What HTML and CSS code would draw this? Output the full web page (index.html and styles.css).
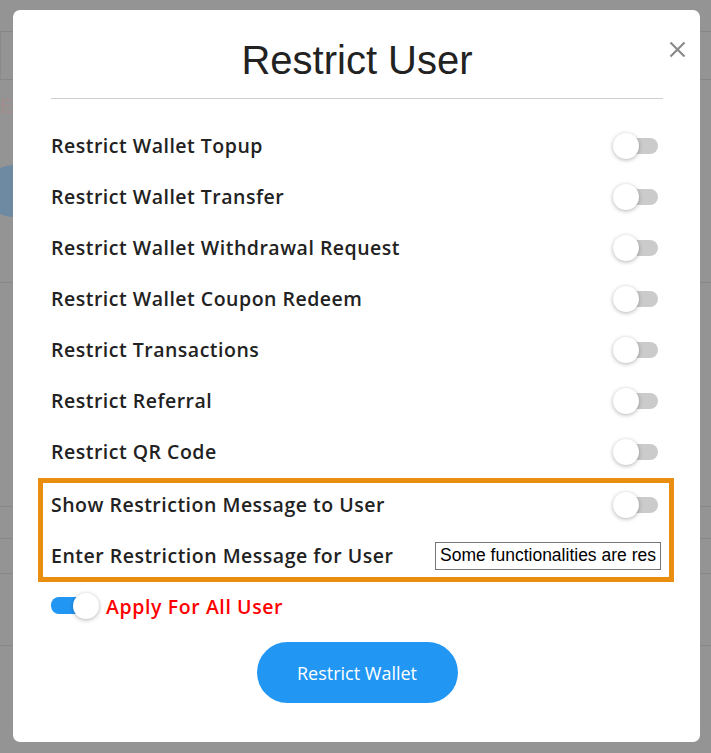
FILE: index.html
```html
<!DOCTYPE html>
<html lang="en">
<head>
    <meta charset="UTF-8">
    <meta name="viewport" content="width=device-width, initial-scale=1.0">
    <title>Restrict User</title>

    <!-- CSS -->
    <link rel="stylesheet" href="styles.css">
</head>
<body>

    <!-- Página por trás do modal -->
    <div class="page">
        <div class="search-box"></div>
        <div class="page-letter">E</div>
        <div class="avatar"></div>
        <div class="page-row row-tall"></div>
        <div class="page-row row-a"></div>
        <div class="page-row row-b"></div>
        <div class="page-row row-c"></div>
        <div class="page-row row-d"></div>
    </div>

    <!-- Modal -->
    <div class="modal">
        <a href="#" class="close-btn" aria-label="Close">
            <svg width="17" height="17" viewBox="0 0 17 17">
                <path d="M1.5 1.5 L15.5 15.5 M15.5 1.5 L1.5 15.5" stroke="#8a8a8a" stroke-width="2.2" fill="none"/>
            </svg>
        </a>

        <h2 class="modal-title">Restrict User</h2>

        <div class="options">
            <div class="option"><span>Restrict Wallet Topup</span><span class="switch"></span></div>
            <div class="option"><span>Restrict Wallet Transfer</span><span class="switch"></span></div>
            <div class="option"><span>Restrict Wallet Withdrawal Request</span><span class="switch"></span></div>
            <div class="option"><span>Restrict Wallet Coupon Redeem</span><span class="switch"></span></div>
            <div class="option"><span>Restrict Transactions</span><span class="switch"></span></div>
            <div class="option"><span>Restrict Referral</span><span class="switch"></span></div>
            <div class="option"><span>Restrict QR Code</span><span class="switch"></span></div>

            <!-- Mensagem de restrição -->
            <div class="message-box">
                <div class="option"><span>Show Restriction Message to User</span><span class="switch"></span></div>
                <div class="option">
                    <span>Enter Restriction Message for User</span>
                    <input type="text" class="message-input" value="Some functionalities are restricted for your account">
                </div>
            </div>

            <div class="apply-all">
                <span class="switch on"></span>
                <span>Apply For All User</span>
            </div>
        </div>

        <div class="actions">
            <button class="restrict-btn">Restrict Wallet</button>
        </div>
    </div>

</body>
</html>
```

FILE: styles.css
```css
body {
    margin: 0;
    padding: 0;
    background-color: #949494;
    font-family: 'Open Sans', 'Liberation Sans', sans-serif;
    color: #222;
}

/* Página de fundo (já escurecida pelo overlay) */
.page {
    height: 753px;
    overflow: hidden;
}

.search-box {
    margin-top: 31px;
    height: 47px;
    border-top: 1px solid #878787;
    border-bottom: 1px solid #878787;
    border-left: 1px solid #8a8a8a;
}

.page-letter {
    margin-top: 14px;
    font-family: 'Liberation Sans', Arial, sans-serif;
    font-size: 20px;
    line-height: 24px;
    color: #a28c8c;
}

.avatar {
    margin-top: 47px;
    margin-left: -14px;
    width: 54px;
    height: 52px;
    border-radius: 50%;
    background-color: #6e8aa2;
}

.page-row {
    border-bottom: 1px solid #888;
}

.row-tall { height: 65px; }
.row-a { height: 223px; }
.row-b { height: 31px; }
.row-c { height: 34px; }
.row-d { height: 71px; }

/* Modal */
.modal {
    position: absolute;
    top: 10px;
    left: 13px;
    width: 687px;
    height: 732px;
    box-sizing: border-box;
    background-color: #fff;
    border-radius: 7px;
    padding: 24px 37px 0 38px;
}

.close-btn {
    position: absolute;
    top: 31px;
    right: 14px;
    display: block;
    width: 17px;
    height: 17px;
}

.close-btn svg {
    display: block;
}

.modal-title {
    margin: 0;
    text-align: center;
    font-family: 'Liberation Sans', Arial, sans-serif;
    font-size: 40px;
    font-weight: normal;
    line-height: 52px;
    color: #222;
    padding-bottom: 12px;
    border-bottom: 1px solid #d0d0d0;
}

.options {
    margin-top: 21px;
}

.option {
    height: 51px;
    display: flex;
    justify-content: space-between;
    align-items: center;
    font-size: 19.5px;
    font-weight: 600;
    letter-spacing: 0.5px;
    color: #222;
}

/* Interruptor */
.switch {
    position: relative;
    width: 45px;
    height: 26px;
    margin-right: 5px;
    flex-shrink: 0;
}

.switch::before {
    content: "";
    position: absolute;
    left: 7px;
    right: 0;
    top: 5px;
    height: 16px;
    border-radius: 8px;
    background-color: #cbcbcb;
}

.switch::after {
    content: "";
    position: absolute;
    left: 0;
    top: 0;
    width: 26px;
    height: 26px;
    border-radius: 50%;
    background-color: #fff;
    box-shadow: 0 1px 4px rgba(0, 0, 0, 0.3);
}

.switch.on {
    width: 48px;
    margin-right: 0;
}

.switch.on::before {
    left: 0;
    right: 3px;
    top: 4px;
    height: 17px;
    background-color: #2196f3;
}

.switch.on::after {
    left: auto;
    right: 0;
}

/* Caixa laranja */
.message-box {
    margin: 1px -11px 0 -13px;
    border: 5px solid #ea8e10;
    padding: 0 8px 0 8px;
    display: flex;
    flex-direction: column;
    gap: 8px;
}

.message-box .option {
    height: 43px;
}

.message-box .switch {
    margin-right: 3px;
}

.message-input {
    width: 226px;
    height: 28px;
    box-sizing: border-box;
    border: 1px solid #767676;
    padding: 1px 4px;
    font-family: 'Liberation Sans', Arial, sans-serif;
    font-size: 17.5px;
    letter-spacing: 0;
    color: #000;
    outline: none;
}

.apply-all {
    margin-top: 9px;
    height: 30px;
    display: flex;
    align-items: center;
    gap: 7px;
    font-size: 19.5px;
    font-weight: 600;
    letter-spacing: 0.6px;
    color: #ff0000;
}

.actions {
    margin-top: 21px;
    text-align: center;
}

.restrict-btn {
    width: 201px;
    height: 61px;
    border: none;
    border-radius: 31px;
    background-color: #2196f3;
    color: #fff;
    font-family: 'Open Sans', 'Liberation Sans', sans-serif;
    font-size: 18px;
    cursor: pointer;
}

.restrict-btn:hover {
    background-color: #1a86dc;
}
```
